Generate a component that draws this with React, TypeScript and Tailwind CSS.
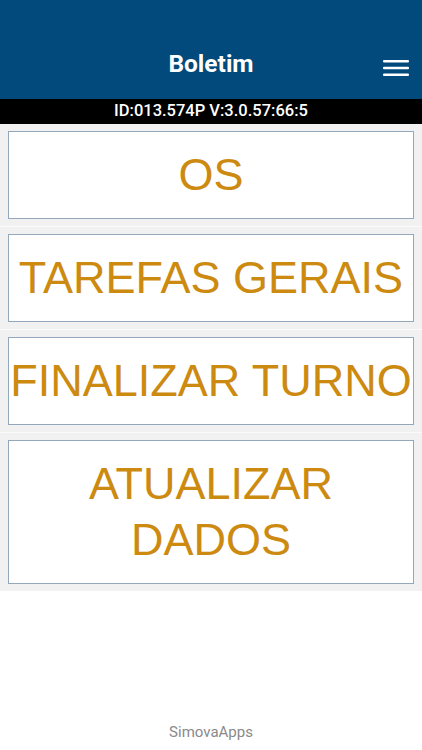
const items = ['OS', 'TAREFAS GERAIS', 'FINALIZAR TURNO', 'ATUALIZAR DADOS']

function MenuIcon() {
  return (
    <svg width="26" height="18" viewBox="0 0 26 18" fill="none">
      <rect x="0" y="1" width="26" height="2.6" rx="1" fill="#fff" />
      <rect x="0" y="7.7" width="26" height="2.6" rx="1" fill="#fff" />
      <rect x="0" y="14.4" width="26" height="2.6" rx="1" fill="#fff" />
    </svg>
  )
}

export default function App() {
  return (
    <div className="flex min-h-[750px] w-[422px] flex-col bg-white font-['Roboto','Liberation_Sans',sans-serif]">
      <header className="relative flex h-[99px] items-end justify-center bg-[#014a7b] pb-[23px]">
        <h1 className="text-[24.5px] font-bold leading-none text-white">Boletim</h1>
        <button className="absolute right-[13px] top-[59px]">
          <MenuIcon />
        </button>
      </header>
      <div className="flex h-[25px] items-center justify-center bg-black text-[16.5px] font-medium text-white">
        ID:013.574P V:3.0.57:66:5
      </div>
      <div className="bg-[#f1f1f1]">
        {items.map((label) => (
          <div key={label} className="border-b border-[#fafafa] px-[8px] py-[7px] last:border-b-0">
            <div className="border border-[#93a8bb] bg-white py-[15px] text-center font-['Liberation_Sans',Arial,sans-serif] text-[45px] leading-[56px] text-[#cd8a10]">
              {label}
            </div>
          </div>
        ))}
      </div>
      <footer className="mt-auto pb-[7px] text-center text-[15px] text-[#8a8a8a]">SimovaApps</footer>
    </div>
  )
}
